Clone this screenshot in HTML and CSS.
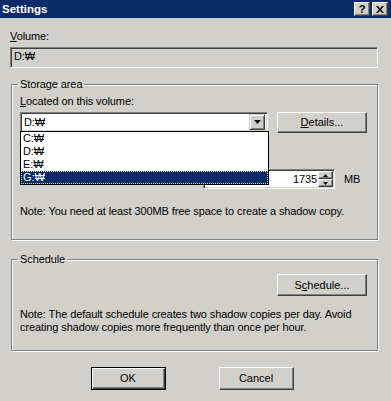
FILE: index.html
```html
<!DOCTYPE html>
<html lang="en">
<head>
    <meta charset="UTF-8">
    <title>Settings</title>
    <link rel="stylesheet" href="styles.css">
</head>
<body>
    <div class="titlebar">
        <span class="title">Settings</span>
        <div class="tb-buttons">
            <button class="tb-btn">?</button>
            <button class="tb-btn">
                <svg width="8" height="7" viewBox="0 0 8 7"><path d="M0 0h2l2 2.5 2-2.5h2l-3 3.5 3 3.5h-2l-2-2.5-2 2.5h-2l3-3.5z" fill="#000"/></svg>
            </button>
        </div>
    </div>
    <div class="content">
        <div class="label"><u>V</u>olume:</div>
        <div class="field field-disabled">D:₩</div>

        <fieldset class="group group-storage">
            <legend>Storage area</legend>
            <div class="label"><u>L</u>ocated on this volume:</div>
            <div class="volume-row">
                <div class="combo">
                    <div class="combo-value">D:₩</div>
                    <span class="combo-arrow">
                        <svg width="7" height="4" viewBox="0 0 7 4"><path d="M0 0h7l-3.5 4z" fill="#000"/></svg>
                    </span>
                    <ul class="combo-list">
                        <li>C:₩</li>
                        <li>D:₩</li>
                        <li>E:₩</li>
                        <li class="selected">G:₩</li>
                    </ul>
                </div>
                <button class="btn"><u>D</u>etails...</button>
            </div>
            <div class="limit-row">
                <div class="spinner">
                    <div class="spin-value">1735</div>
                    <div class="spin-buttons">
                        <span class="spin-btn"><svg width="5" height="3" viewBox="0 0 5 3"><path d="M2.5 0l2.5 3h-5z" fill="#000"/></svg></span>
                        <span class="spin-btn"><svg width="5" height="3" viewBox="0 0 5 3"><path d="M0 0h5l-2.5 3z" fill="#000"/></svg></span>
                    </div>
                </div>
                <span class="unit">MB</span>
            </div>
            <p class="note">Note: You need at least 300MB free space to create a shadow copy.</p>
        </fieldset>

        <fieldset class="group group-schedule">
            <legend>Schedule</legend>
            <div class="schedule-row">
                <button class="btn">S<u>c</u>hedule...</button>
            </div>
            <p class="note">Note: The default schedule creates two shadow copies per day. Avoid<br>creating shadow copies more frequently than once per hour.</p>
        </fieldset>

        <div class="actions">
            <button class="btn btn-default">OK</button>
            <button class="btn">Cancel</button>
        </div>
    </div>
</body>
</html>
```

FILE: styles.css
```css
:root {
    --face: #d2d0cb;
    --shadow: #808080;
    --dark: #404040;
    --navy: #0a2c68;
}
* {
    box-sizing: border-box;
}
body {
    margin: 0;
    width: 391px;
    height: 401px;
    overflow: hidden;
    background: var(--face);
    font-family: "Liberation Sans", "DejaVu Sans", Arial, sans-serif;
    font-size: 11px;
    line-height: 13px;
    letter-spacing: -0.1px;
    color: #000;
}
.titlebar {
    height: 18px;
    background: var(--navy);
    display: flex;
    align-items: center;
    justify-content: space-between;
    padding: 0 3px 0 2px;
}
.title {
    color: #fff;
    font-weight: bold;
    font-size: 11.5px;
    letter-spacing: 0;
}
.tb-buttons {
    display: flex;
    gap: 2px;
}
.tb-btn {
    width: 16px;
    height: 14px;
    padding: 0;
    background: var(--face);
    border: 1px solid;
    border-color: #fff var(--dark) var(--dark) #fff;
    box-shadow: inset -1px -1px 0 var(--shadow);
    font: bold 11px/11px "Liberation Sans", sans-serif;
    display: flex;
    align-items: center;
    justify-content: center;
}
.content {
    padding: 12px 13px 0 10px;
}
.field {
    height: 21px;
    margin-top: 4px;
    padding: 2px 3px;
    border: 1px solid;
    border-color: var(--shadow) #fff #fff var(--shadow);
    box-shadow: inset 1px 1px 0 var(--dark);
}
.group {
    margin: 10px 0 0 1px;
    padding: 4px 10px 21px 8px;
    border: 1px solid var(--shadow);
    box-shadow: 1px 1px 0 #fff, inset 1px 1px 0 #fff;
}
.group legend {
    padding: 0 2px;
    margin-left: -2px;
}
.volume-row {
    display: flex;
    justify-content: space-between;
    margin-top: 4px;
}
.combo {
    position: relative;
    width: 248px;
    height: 20px;
    background: #fff;
    border: 1px solid;
    border-color: var(--shadow) #fff #fff var(--shadow);
    box-shadow: inset 1px 1px 0 var(--dark), inset -1px -1px 0 var(--face);
    display: flex;
    align-items: center;
    padding: 0 2px;
}
.combo-value {
    flex: 1;
    padding-left: 1px;
}
.combo-arrow {
    width: 16px;
    height: 16px;
    background: var(--face);
    border: 1px solid;
    border-color: var(--face) var(--dark) var(--dark) var(--face);
    box-shadow: inset 1px 1px 0 #fff, inset -1px -1px 0 var(--shadow);
    display: flex;
    align-items: center;
    justify-content: center;
}
.combo-list {
    position: absolute;
    top: 100%;
    left: -1px;
    width: 249px;
    margin: 0;
    padding: 0;
    list-style: none;
    background: #fff;
    border: 1px solid #000;
    z-index: 2;
}
.combo-list li {
    height: 13px;
    padding-left: 2px;
}
.combo-list li.selected {
    background: var(--navy);
    color: #fff;
    outline: 1px dotted #f5db95;
    outline-offset: -1px;
}
.btn {
    width: 90px;
    height: 21px;
    padding: 0;
    background: var(--face);
    border: 1px solid;
    border-color: #fff var(--dark) var(--dark) #fff;
    box-shadow: inset -1px -1px 0 var(--shadow);
    font: inherit;
    color: #000;
}
.limit-row {
    display: flex;
    align-items: center;
    margin-top: 36px;
    padding-left: 183px;
}
.spinner {
    width: 132px;
    height: 20px;
    background: #fff;
    border: 1px solid;
    border-color: var(--shadow) #fff #fff var(--shadow);
    box-shadow: inset 1px 1px 0 var(--dark), inset -1px -1px 0 var(--face);
    display: flex;
    padding: 1px;
}
.spin-value {
    flex: 1;
    text-align: right;
    padding: 2px 1px 0 0;
}
.spin-buttons {
    width: 15px;
    display: flex;
    flex-direction: column;
}
.spin-btn {
    flex: 1;
    background: var(--face);
    border: 1px solid;
    border-color: #fff var(--dark) var(--dark) #fff;
    box-shadow: inset -1px -1px 0 var(--shadow);
    display: flex;
    align-items: center;
    justify-content: center;
}
.unit {
    margin-left: 9px;
}
.note {
    margin: 16px 0 0;
}
.group-schedule {
    margin-top: 13px;
    padding-bottom: 16px;
}
.schedule-row {
    display: flex;
    justify-content: flex-end;
    margin-top: 4px;
}
.schedule-row .btn {
    height: 22px;
}
.group-schedule .note {
    margin-top: 12px;
}
.actions {
    display: flex;
    justify-content: center;
    gap: 53px;
    margin-top: 16px;
    padding-right: 4px;
}
.actions .btn {
    width: 75px;
    height: 23px;
}
.btn-default {
    border: 1px solid #000;
    box-shadow: inset 1px 1px 0 #fff, inset -1px -1px 0 var(--dark), inset -2px -2px 0 var(--shadow);
}
```
